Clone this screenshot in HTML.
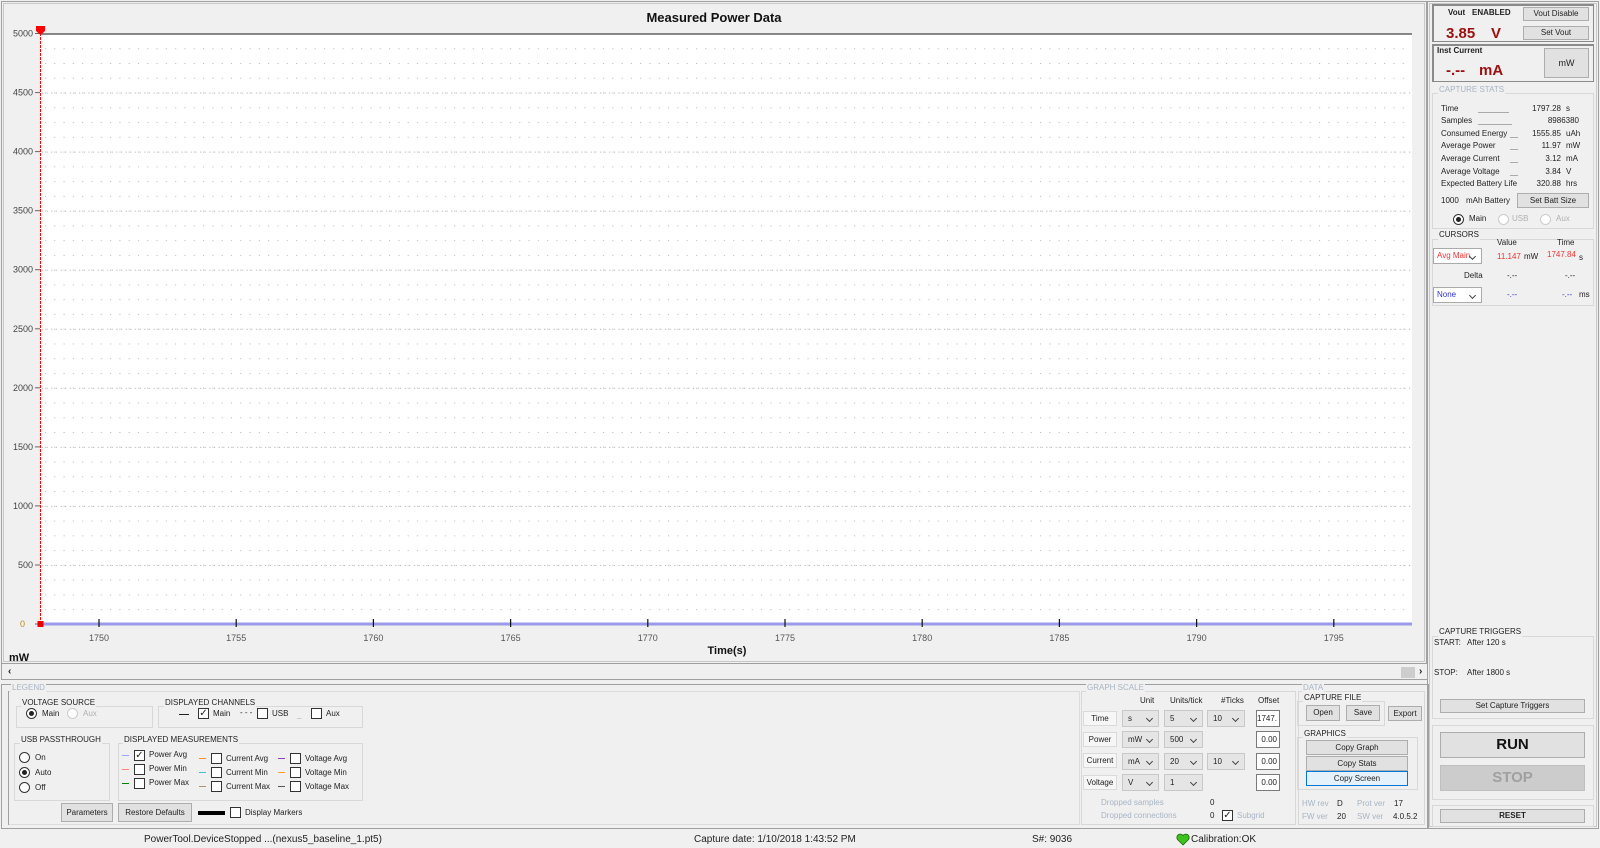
<!DOCTYPE html>
<html><head><meta charset="utf-8"><style>
*{margin:0;padding:0;box-sizing:border-box}
body{width:1600px;height:848px;background:#f0f0f0;font-family:"Liberation Sans",sans-serif;position:relative;overflow:hidden;color:#222}
.a{position:absolute}
.t{position:absolute;font-size:8px;line-height:10px;white-space:nowrap;color:#222}
.g{position:absolute;border:1px solid #d8d8d8}
.gl{position:absolute;font-size:8px;line-height:10px;background:#f0f0f0;padding:0 1px;white-space:nowrap;color:#222}
.gray{color:#a8b4c4}
.btn{position:absolute;background:#e1e1e1;border:1px solid #adadad;font-size:8px;text-align:center;white-space:nowrap;color:#222}
.cb{position:absolute;width:11px;height:11px;border:1px solid #333;background:#fff;font-size:10px;line-height:9px;text-align:center}
.rb{position:absolute;width:11px;height:11px;border:1px solid #333;border-radius:50%;background:#fff}
.rb.on::after{content:"";position:absolute;left:2px;top:2px;width:5px;height:5px;border-radius:50%;background:#222}
.rb.dis{border-color:#ccc}
.co{position:absolute;background:#e5e5e5;border:1px solid #c8c8c8;font-size:8px;line-height:15px;padding-left:5px;height:17px}
.co::after{content:"";position:absolute;right:6px;top:5px;width:4px;height:4px;border-right:1px solid #444;border-bottom:1px solid #444;transform:rotate(45deg)}
.tb{position:absolute;background:#fff;border:1px solid #7a7a7a;font-size:8px;line-height:15px;text-align:right;padding-right:2px;height:17px}
.rl{position:absolute;background:#f6f6f6;border:1px solid #dadada;font-size:8px;line-height:13px;text-align:center;height:15px}
</style></head><body>

<div class="a" style="left:1px;top:1px;width:1426px;height:663px;border:1px solid #a0a0a0"></div>
<div class="a" style="left:3px;top:3px;width:1422px;height:659px;border:1px solid #c8c8c8"></div>

<div class="a" style="left:0;top:10px;width:1428px;text-align:center;font-size:13px;font-weight:bold;color:#111">Measured Power Data</div>

<svg class="a" style="left:0;top:0" width="1428" height="664">
<defs>
<pattern id="mn" x="40" y="33.5" width="9.3" height="14.76" patternUnits="userSpaceOnUse"><rect x="5" y="0" width="1" height="1" fill="#b4b4b4"/></pattern>
<pattern id="mj" x="40" y="33.5" width="4.65" height="59.05" patternUnits="userSpaceOnUse"><rect x="2" y="0" width="1" height="1" fill="#a8a8a8"/></pattern>
<pattern id="st" x="40" y="0" width="27.44" height="10" patternUnits="userSpaceOnUse"><rect x="12" y="0" width="2" height="2" fill="#fff"/></pattern>
</defs>
<rect x="40" y="33.5" width="1372" height="591" fill="#fff"/>
<rect x="40" y="40" width="1372" height="580" fill="url(#mn)"/>
<rect x="40" y="40" width="1372" height="580" fill="url(#mj)"/>
<line x1="40" y1="34" x2="1412" y2="34" stroke="#444" stroke-width="1.3"/>
<g stroke="#666" stroke-width="1">
<line x1="35" y1="33.5" x2="40" y2="33.5"/><line x1="35" y1="92.6" x2="40" y2="92.6"/><line x1="35" y1="151.6" x2="40" y2="151.6"/><line x1="35" y1="210.7" x2="40" y2="210.7"/><line x1="35" y1="269.7" x2="40" y2="269.7"/><line x1="35" y1="328.8" x2="40" y2="328.8"/><line x1="35" y1="387.8" x2="40" y2="387.8"/><line x1="35" y1="446.9" x2="40" y2="446.9"/><line x1="35" y1="505.9" x2="40" y2="505.9"/><line x1="35" y1="565" x2="40" y2="565"/><line x1="35" y1="624" x2="40" y2="624"/>
</g>
<rect x="40" y="622.5" width="1372" height="3" fill="#9a9ae8"/>
<rect x="40" y="623" width="1372" height="2" fill="url(#st)"/>
<g stroke="#111" stroke-width="1.2">
<line x1="99" y1="619" x2="99" y2="627"/><line x1="236.2" y1="619" x2="236.2" y2="627"/><line x1="373.4" y1="619" x2="373.4" y2="627"/><line x1="510.6" y1="619" x2="510.6" y2="627"/><line x1="647.8" y1="619" x2="647.8" y2="627"/><line x1="785" y1="619" x2="785" y2="627"/><line x1="922.2" y1="619" x2="922.2" y2="627"/><line x1="1059.4" y1="619" x2="1059.4" y2="627"/><line x1="1196.6" y1="619" x2="1196.6" y2="627"/><line x1="1333.8" y1="619" x2="1333.8" y2="627"/>
</g>
<line x1="40.5" y1="33" x2="40.5" y2="624" stroke="#f00" stroke-width="1" stroke-dasharray="3 1"/>
<polygon points="36,26 45,26 45,31 40.5,35 36,31" fill="#f00"/>
<rect x="37.5" y="621" width="6" height="6" fill="#e00"/>
<g font-family="Liberation Sans,sans-serif" font-size="9" fill="#444" text-anchor="end">
<text x="33" y="36.5">5000</text><text x="33" y="95.6">4500</text><text x="33" y="154.6">4000</text><text x="33" y="213.7">3500</text><text x="33" y="272.7">3000</text><text x="33" y="331.8">2500</text><text x="33" y="390.8">2000</text><text x="33" y="449.9">1500</text><text x="33" y="508.9">1000</text><text x="33" y="568">500</text><text x="25" y="627" fill="#c08a20">0</text>
</g>
<g font-family="Liberation Sans,sans-serif" font-size="9" fill="#555" text-anchor="middle">
<text x="99" y="641">1750</text><text x="236.2" y="641">1755</text><text x="373.4" y="641">1760</text><text x="510.6" y="641">1765</text><text x="647.8" y="641">1770</text><text x="785" y="641">1775</text><text x="922.2" y="641">1780</text><text x="1059.4" y="641">1785</text><text x="1196.6" y="641">1790</text><text x="1333.8" y="641">1795</text>
</g>
<text x="727" y="654" font-family="Liberation Sans,sans-serif" font-size="11" font-weight="bold" text-anchor="middle" fill="#111">Time(s)</text>
<text x="9" y="661" font-family="Liberation Sans,sans-serif" font-size="11" font-weight="bold" fill="#111">mW</text>
</svg>

<div class="a" style="left:1px;top:664px;width:1426px;height:16px;border-bottom:1px solid #a0a0a0;border-left:1px solid #a0a0a0"></div>
<div class="t" style="left:8px;top:667px;font-size:10px;font-weight:bold">&lsaquo;</div>
<div class="a" style="left:1401px;top:667px;width:14px;height:11px;background:#cdcdcd"></div>
<div class="t" style="left:1419px;top:667px;font-size:10px;font-weight:bold">&rsaquo;</div>

<div class="a" style="left:1px;top:684px;width:1428px;height:145px;border:1px solid #a0a0a0"></div>

<div class="g" style="left:8px;top:691px;width:1072px;height:134px;border-color:#dcdcdc"></div>
<div class="a" style="left:8px;top:691px;width:1px;height:134px;background:#a0a0a0"></div>
<div class="gl gray" style="left:11px;top:683px">LEGEND</div>

<div class="g" style="left:16px;top:706px;width:137px;height:22px"></div>
<div class="gl" style="left:21px;top:698px">VOLTAGE SOURCE</div>
<div class="rb on" style="left:26px;top:708px"></div><div class="t" style="left:42px;top:709px">Main</div>
<div class="rb dis" style="left:67px;top:708px"></div><div class="t gray" style="left:83px;top:709px;color:#b0b0b0">Aux</div>

<div class="g" style="left:158px;top:706px;width:205px;height:22px"></div>
<div class="gl" style="left:164px;top:698px">DISPLAYED CHANNELS</div>
<div class="a" style="left:179px;top:714px;width:10px;height:1px;background:#222"></div>
<div class="cb" style="left:198px;top:708px">&#10003;</div><div class="t" style="left:213px;top:709px">Main</div>
<div class="t" style="left:240px;top:708px">- - -</div>
<div class="cb" style="left:257px;top:708px"></div><div class="t" style="left:272px;top:709px">USB</div>
<div class="t" style="left:297px;top:710px;color:#aaa">_</div>
<div class="cb" style="left:311px;top:708px"></div><div class="t" style="left:326px;top:709px">Aux</div>

<div class="g" style="left:14px;top:743px;width:96px;height:58px"></div>
<div class="gl" style="left:20px;top:735px">USB PASSTHROUGH</div>
<div class="rb" style="left:19px;top:752px"></div><div class="t" style="left:35px;top:753px">On</div>
<div class="rb on" style="left:19px;top:767px"></div><div class="t" style="left:35px;top:768px">Auto</div>
<div class="rb" style="left:19px;top:782px"></div><div class="t" style="left:35px;top:783px">Off</div>

<div class="g" style="left:118px;top:743px;width:245px;height:58px"></div>
<div class="gl" style="left:123px;top:735px">DISPLAYED MEASUREMENTS</div>
<div class="a" style="left:122px;top:755px;width:7px;height:1px;background:#a0a0ff"></div>
<div class="cb" style="left:134px;top:750px">&#10003;</div><div class="t" style="left:149px;top:750px">Power Avg</div>
<div class="a" style="left:122px;top:769px;width:7px;height:1px;background:#ff8080"></div>
<div class="cb" style="left:134px;top:764px"></div><div class="t" style="left:149px;top:764px">Power Min</div>
<div class="a" style="left:122px;top:783px;width:7px;height:1px;background:#008000"></div>
<div class="cb" style="left:134px;top:778px"></div><div class="t" style="left:149px;top:778px">Power Max</div>
<div class="a" style="left:199px;top:758px;width:7px;height:1px;background:#ff9020"></div>
<div class="cb" style="left:211px;top:753px"></div><div class="t" style="left:226px;top:754px">Current Avg</div>
<div class="a" style="left:199px;top:772px;width:7px;height:1px;background:#40c0d0"></div>
<div class="cb" style="left:211px;top:767px"></div><div class="t" style="left:226px;top:768px">Current Min</div>
<div class="a" style="left:199px;top:786px;width:7px;height:1px;background:#b09070"></div>
<div class="cb" style="left:211px;top:781px"></div><div class="t" style="left:226px;top:782px">Current Max</div>
<div class="a" style="left:278px;top:758px;width:7px;height:1px;background:#9040c0"></div>
<div class="cb" style="left:290px;top:753px"></div><div class="t" style="left:305px;top:754px">Voltage Avg</div>
<div class="a" style="left:278px;top:772px;width:7px;height:1px;background:#ffa030"></div>
<div class="cb" style="left:290px;top:767px"></div><div class="t" style="left:305px;top:768px">Voltage Min</div>
<div class="a" style="left:278px;top:786px;width:7px;height:1px;background:#555"></div>
<div class="cb" style="left:290px;top:781px"></div><div class="t" style="left:305px;top:782px">Voltage Max</div>

<div class="btn" style="left:61px;top:803px;width:52px;height:19px;line-height:17px">Parameters</div>
<div class="btn" style="left:118px;top:803px;width:74px;height:19px;line-height:17px">Restore Defaults</div>
<div class="a" style="left:198px;top:811px;width:27px;height:4px;background:#000"></div>
<div class="cb" style="left:230px;top:807px"></div><div class="t" style="left:245px;top:808px">Display Markers</div>

<div class="g" style="left:1081px;top:691px;width:215px;height:134px"></div>
<div class="gl gray" style="left:1086px;top:683px">GRAPH SCALE</div>
<div class="t" style="left:1140px;top:696px">Unit</div>
<div class="t" style="left:1170px;top:696px">Units/tick</div>
<div class="t" style="left:1221px;top:696px">#Ticks</div>
<div class="t" style="left:1258px;top:696px">Offset</div>
<div class="rl" style="left:1083px;top:711px;width:34px">Time</div>
<div class="co" style="left:1122px;top:710px;width:37px">s</div>
<div class="co" style="left:1164px;top:710px;width:39px">5</div>
<div class="co" style="left:1207px;top:710px;width:38px">10</div>
<div class="tb" style="left:1256px;top:710px;width:24px">1747.</div>
<div class="rl" style="left:1083px;top:732px;width:34px">Power</div>
<div class="co" style="left:1122px;top:731px;width:37px">mW</div>
<div class="co" style="left:1164px;top:731px;width:39px">500</div>
<div class="tb" style="left:1256px;top:731px;width:24px">0.00</div>
<div class="rl" style="left:1083px;top:753px;width:34px">Current</div>
<div class="co" style="left:1122px;top:753px;width:37px">mA</div>
<div class="co" style="left:1164px;top:753px;width:39px">20</div>
<div class="co" style="left:1207px;top:753px;width:38px">10</div>
<div class="tb" style="left:1256px;top:753px;width:24px">0.00</div>
<div class="rl" style="left:1083px;top:775px;width:34px">Voltage</div>
<div class="co" style="left:1122px;top:774px;width:37px">V</div>
<div class="co" style="left:1164px;top:774px;width:39px">1</div>
<div class="tb" style="left:1256px;top:774px;width:24px">0.00</div>
<div class="t gray" style="left:1101px;top:798px">Dropped samples</div>
<div class="t" style="left:1210px;top:798px">0</div>
<div class="t gray" style="left:1101px;top:811px">Dropped connections</div>
<div class="t" style="left:1210px;top:811px">0</div>
<div class="cb" style="left:1222px;top:810px">&#10003;</div>
<div class="t gray" style="left:1237px;top:811px">Subgrid</div>

<div class="g" style="left:1298px;top:691px;width:127px;height:134px"></div>
<div class="gl gray" style="left:1302px;top:683px">DATA</div>
<div class="g" style="left:1297px;top:701px;width:88px;height:25px"></div>
<div class="gl" style="left:1303px;top:693px">CAPTURE FILE</div>
<div class="btn" style="left:1306px;top:705px;width:34px;height:16px;line-height:14px">Open</div>
<div class="btn" style="left:1346px;top:705px;width:34px;height:16px;line-height:14px">Save</div>
<div class="btn" style="left:1388px;top:706px;width:34px;height:15px;line-height:13px">Export</div>
<div class="g" style="left:1297px;top:737px;width:121px;height:53px"></div>
<div class="gl" style="left:1303px;top:729px">GRAPHICS</div>
<div class="btn" style="left:1306px;top:740px;width:102px;height:15px;line-height:13px">Copy Graph</div>
<div class="btn" style="left:1306px;top:756px;width:102px;height:15px;line-height:13px">Copy Stats</div>
<div class="btn" style="left:1306px;top:771px;width:102px;height:15px;line-height:13px;background:#e5f1fb;border-color:#0078d7">Copy Screen</div>
<div class="t gray" style="left:1302px;top:799px">HW rev</div><div class="t" style="left:1337px;top:799px">D</div>
<div class="t gray" style="left:1357px;top:799px">Prot ver</div><div class="t" style="left:1394px;top:799px">17</div>
<div class="t gray" style="left:1302px;top:812px">FW ver</div><div class="t" style="left:1337px;top:812px">20</div>
<div class="t gray" style="left:1357px;top:812px">SW ver</div><div class="t" style="left:1393px;top:812px">4.0.5.2</div>

<div class="a" style="left:1427px;top:1px;width:172px;height:828px;border:1px solid #a0a0a0"></div>
<div class="a" style="left:1429px;top:3px;width:168px;height:824px;border:1px solid #c8c8c8"></div>

<div class="a" style="left:1432px;top:4px;width:162px;height:38px;border:1px solid #8a8a8a;border-top-width:2px;border-left-width:2px"></div>
<div class="t" style="left:1448px;top:8px;font-weight:bold">Vout</div>
<div class="t" style="left:1472px;top:8px;font-weight:bold">ENABLED</div>
<div class="btn" style="left:1523px;top:7px;width:66px;height:14px;line-height:12px">Vout Disable</div>
<div class="btn" style="left:1523px;top:26px;width:66px;height:14px;line-height:12px">Set Vout</div>
<div class="t" style="left:1446px;top:25px;font-size:15px;line-height:18px;font-weight:bold;color:#9a1010">3.85</div>
<div class="t" style="left:1491px;top:25px;font-size:15px;line-height:18px;font-weight:bold;color:#9a1010">V</div>

<div class="a" style="left:1432px;top:44px;width:162px;height:38px;border:1px solid #8a8a8a;border-top-width:2px;border-left-width:2px"></div>
<div class="t" style="left:1437px;top:46px;font-weight:bold">Inst Current</div>
<div class="t" style="left:1446px;top:62px;font-size:15px;line-height:18px;font-weight:bold;color:#9a1010">-.--</div>
<div class="t" style="left:1479px;top:62px;font-size:15px;line-height:18px;font-weight:bold;color:#9a1010">mA</div>
<div class="btn" style="left:1544px;top:48px;width:45px;height:30px;line-height:28px;font-size:9px">mW</div>

<div class="g" style="left:1432px;top:93px;width:162px;height:136px"></div>
<div class="gl gray" style="left:1438px;top:85px">CAPTURE STATS</div>
<div class="t" style="left:1441px;top:104px">Time</div><div class="a" style="left:1478px;top:112px;width:31px;height:1px;background:#aaa"></div><div class="t" style="left:1520px;top:104px;width:41px;text-align:right">1797.28</div><div class="t" style="left:1566px;top:104px">s</div>
<div class="t" style="left:1441px;top:116px">Samples</div><div class="a" style="left:1478px;top:124px;width:34px;height:1px;background:#aaa"></div><div class="t" style="left:1530px;top:116px;width:49px;text-align:right">8986380</div>
<div class="t" style="left:1441px;top:129px">Consumed Energy</div><div class="a" style="left:1510px;top:137px;width:8px;height:1px;background:#aaa"></div><div class="t" style="left:1520px;top:129px;width:41px;text-align:right">1555.85</div><div class="t" style="left:1566px;top:129px">uAh</div>
<div class="t" style="left:1441px;top:141px">Average Power</div><div class="a" style="left:1510px;top:149px;width:8px;height:1px;background:#aaa"></div><div class="t" style="left:1520px;top:141px;width:41px;text-align:right">11.97</div><div class="t" style="left:1566px;top:141px">mW</div>
<div class="t" style="left:1441px;top:154px">Average Current</div><div class="a" style="left:1510px;top:162px;width:8px;height:1px;background:#aaa"></div><div class="t" style="left:1520px;top:154px;width:41px;text-align:right">3.12</div><div class="t" style="left:1566px;top:154px">mA</div>
<div class="t" style="left:1441px;top:167px">Average Voltage</div><div class="a" style="left:1510px;top:175px;width:8px;height:1px;background:#aaa"></div><div class="t" style="left:1520px;top:167px;width:41px;text-align:right">3.84</div><div class="t" style="left:1566px;top:167px">V</div>
<div class="t" style="left:1441px;top:179px">Expected Battery Life</div><div class="t" style="left:1520px;top:179px;width:41px;text-align:right">320.88</div><div class="t" style="left:1566px;top:179px">hrs</div>
<div class="t" style="left:1441px;top:196px">1000</div><div class="t" style="left:1466px;top:196px">mAh Battery</div>
<div class="btn" style="left:1517px;top:193px;width:72px;height:15px;line-height:13px">Set Batt Size</div>
<div class="rb on" style="left:1453px;top:214px"></div><div class="t" style="left:1469px;top:214px">Main</div>
<div class="rb dis" style="left:1498px;top:214px"></div><div class="t" style="left:1512px;top:214px;color:#b0b0b0">USB</div>
<div class="rb dis" style="left:1540px;top:214px"></div><div class="t" style="left:1556px;top:214px;color:#b0b0b0">Aux</div>

<div class="g" style="left:1432px;top:239px;width:162px;height:67px"></div>
<div class="gl" style="left:1438px;top:230px">CURSORS</div>
<div class="t" style="left:1497px;top:238px">Value</div><div class="t" style="left:1557px;top:238px">Time</div>
<div class="co" style="left:1433px;top:248px;width:49px;height:16px;background:#fff;border-color:#aaa;color:#e33;line-height:14px;padding-left:3px">Avg Main</div>
<div class="t" style="left:1497px;top:252px;color:#e33">11.147</div><div class="t" style="left:1524px;top:252px">mW</div>
<div class="t" style="left:1547px;top:250px;color:#e33">1747.84</div><div class="t" style="left:1579px;top:253px">s</div>
<div class="t" style="left:1464px;top:271px">Delta</div>
<div class="t" style="left:1507px;top:271px">-.--</div><div class="t" style="left:1565px;top:271px">-.--</div>
<div class="co" style="left:1433px;top:287px;width:49px;height:16px;background:#fff;border-color:#aaa;color:#33c;line-height:14px;padding-left:3px">None</div>
<div class="t" style="left:1507px;top:290px;color:#33c">-.--</div><div class="t" style="left:1562px;top:290px;color:#33c">-.--</div><div class="t" style="left:1579px;top:290px">ms</div>

<div class="g" style="left:1432px;top:636px;width:162px;height:83px"></div>
<div class="gl" style="left:1438px;top:627px">CAPTURE TRIGGERS</div>
<div class="t" style="left:1434px;top:638px">START:</div><div class="t" style="left:1467px;top:638px">After 120 s</div>
<div class="t" style="left:1434px;top:668px">STOP:</div><div class="t" style="left:1467px;top:668px">After 1800 s</div>
<div class="btn" style="left:1440px;top:699px;width:145px;height:14px;line-height:12px">Set Capture Triggers</div>

<div class="g" style="left:1432px;top:725px;width:162px;height:75px"></div>
<div class="btn" style="left:1440px;top:732px;width:145px;height:26px;line-height:24px;font-size:15px;font-weight:bold;color:#111">RUN</div>
<div class="btn" style="left:1440px;top:765px;width:145px;height:26px;line-height:24px;font-size:15px;font-weight:bold;color:#a0a0a0;background:#cccccc;border-color:#bfbfbf">STOP</div>
<div class="g" style="left:1432px;top:805px;width:162px;height:22px"></div>
<div class="btn" style="left:1440px;top:809px;width:145px;height:14px;line-height:12px;font-weight:bold">RESET</div>

<div class="t" style="left:144px;top:834px;font-size:10px;line-height:12px">PowerTool.DeviceStopped ...(nexus5_baseline_1.pt5)</div>
<div class="t" style="left:694px;top:834px;font-size:10px;line-height:12px">Capture date: 1/10/2018 1:43:52 PM</div>
<div class="t" style="left:1032px;top:834px;font-size:10px;line-height:12px">S#: 9036</div>
<svg class="a" style="left:1176px;top:833px" width="14" height="13" viewBox="0 0 14 13"><path d="M7 12 L1.5 6.5 A3.2 3.2 0 0 1 7 2.5 A3.2 3.2 0 0 1 12.5 6.5 Z" fill="#3ec21e" stroke="#1a6a0a" stroke-width="0.8"/></svg>
<div class="t" style="left:1191px;top:834px;font-size:10px;line-height:12px">Calibration:OK</div>
</body></html>
